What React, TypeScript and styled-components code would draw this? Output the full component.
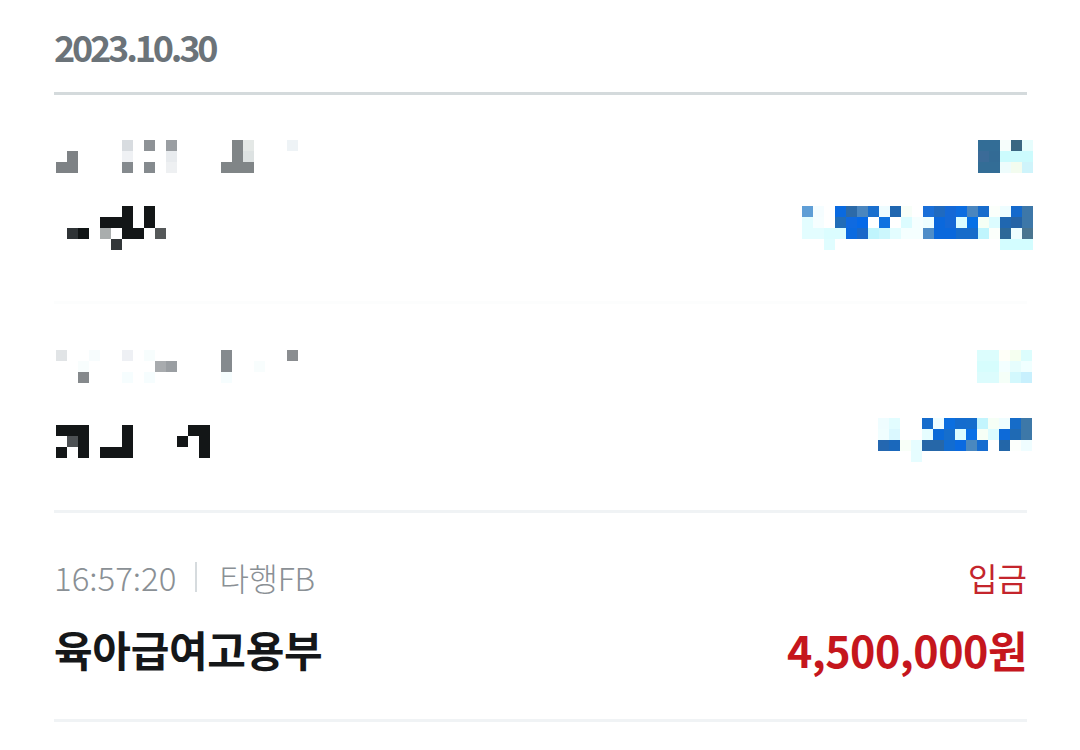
import React from "react";
import styled, { createGlobalStyle } from "styled-components";

const CELL = 11;
type MosaicRow = Array<[number, string]>;

const GlobalStyle = createGlobalStyle`
  html, body { margin: 0; padding: 0; background: #ffffff; }
  body { font-family: "Noto Sans CJK KR", "Noto Sans", sans-serif; }
`;

const Page = styled.div`
  width: 1080px;
  height: 750px;
  box-sizing: border-box;
  padding: 0 53px 0 54px;
  overflow: hidden;
  background: #ffffff;
`;

const DateHeader = styled.div`
  height: 95px;
  box-sizing: border-box;
  padding-top: 27px;
  border-bottom: 3px solid #d4dadc;
  font-size: 36px;
  line-height: 38px;
  font-weight: 700;
  color: #6b7379;
  letter-spacing: -3.2px;
`;

const Item = styled.div<{ $faint?: boolean }>`
  height: 209px;
  box-sizing: border-box;
  padding-top: 44px;
  display: flex;
  flex-direction: column;
  gap: 28px;
  border-bottom: 3px solid ${(p) => (p.$faint ? "#fcfdfd" : "#f0f3f5")};
`;

const TopLine = styled.div`
  height: 40px;
  display: flex;
  align-items: center;
  justify-content: space-between;
`;

const BottomLine = styled.div`
  height: 48px;
  display: flex;
  align-items: center;
  justify-content: space-between;
`;

const Meta = styled.div`
  display: flex;
  align-items: center;
  font-size: 32px;
  line-height: 40px;
  color: #8a9095;
  font-weight: 300;
  letter-spacing: -0.3px;
`;

const Time = styled.span`
  font-size: 33px;
  letter-spacing: 0px;
`;

const Divider = styled.span`
  width: 2px;
  height: 30px;
  background: #d6dbde;
  margin: 0 22px 0 19px;
`;

const Kind = styled.div`
  font-size: 32px;
  line-height: 40px;
  color: #c4252c;
  font-weight: 400;
`;

const Name = styled.div`
  font-size: 42px;
  line-height: 48px;
  font-weight: 700;
  color: #151719;
  letter-spacing: -0.3px;
`;

const Amount = styled.div`
  font-size: 43px;
  line-height: 48px;
  font-weight: 700;
  color: #c5161d;
  letter-spacing: -0.5px;
`;

const MosaicSvg = styled.svg<{ $dx: number; $dy: number }>`
  display: block;
  flex: none;
  shape-rendering: crispEdges;
  transform: translate(${(p) => p.$dx}px, ${(p) => p.$dy}px);
`;

function Mosaic({ rows, cols, dx = 0, dy = 0 }: { rows: MosaicRow[]; cols: number; dx?: number; dy?: number }) {
  const w = cols * CELL;
  const h = rows.length * CELL;
  return (
    <MosaicSvg $dx={dx} $dy={dy} width={w} height={h} viewBox={`0 0 ${w} ${h}`}>
      {rows.map((r, ri) =>
        r.map(([c, color]) => (
          <rect key={`${ri}-${c}`} x={c * CELL} y={ri * CELL} width={CELL} height={CELL} fill={color} />
        ))
      )}
    </MosaicSvg>
  );
}

const G = "#808587";
const K = "#131617";

const tx1Meta: MosaicRow[] = [
  [[6, "#d8dce0"], [8, "#8e9296"], [10, "#9a9ea2"], [16, G], [17, "#e4e8e6"], [21, "#eef3f6"]],
  [[1, "#7e8285"], [6, "#eff1f4"], [10, "#e8ebee"], [16, G], [17, "#dde2e2"]],
  [[0, "#7e8285"], [1, "#7e8285"], [6, "#858a8e"], [8, "#858a8e"], [10, "#eef0f2"], [15, G], [16, G], [17, G]],
];

const tx1Name: MosaicRow[] = [
  [[6, K], [8, K]],
  [[4, K], [5, K], [6, K], [8, K]],
  [[1, "#2f3336"], [2, "#101415"], [4, "#a9adad"], [6, K], [7, K], [9, "#555859"]],
  [[5, "#333739"]],
];

const tx1Kind: MosaicRow[] = [
  [[0, "#336d96"], [1, "#336d96"], [2, "#f6fdfb"], [3, "#3a6782"], [4, "#e6fdfd"]],
  [[0, "#3b6b98"], [1, "#336b95"], [2, "#ccfbfd"], [3, "#ccfbfd"], [4, "#ccfbfd"]],
  [[0, "#336d96"], [1, "#336d96"], [2, "#eefcfc"], [3, "#f3fcef"], [4, "#cff4fb"]],
];

const tx1Amount: MosaicRow[] = [
  [[0, "#5f9ed6"], [1, "#f5fdff"], [3, "#0a6ae0"], [4, "#2c6aa8"], [5, "#4a86bf"], [6, "#1a6fce"], [7, "#eefcff"], [8, "#2066b0"], [9, "#f8fef8"], [11, "#1a6fd8"], [12, "#1f6ac0"], [13, "#1468d6"], [14, "#0c6de0"], [15, "#4a86bf"], [16, "#186ccc"], [17, "#fbfffb"], [18, "#eefdff"], [19, "#1469cc"], [20, "#3d77a8"]],
  [[0, "#e3fdff"], [1, "#f6feff"], [3, "#216db8"], [4, "#0f6ae0"], [5, "#0569e8"], [7, "#0f72e0"], [9, "#dcfcff"], [10, "#f5ffff"], [11, "#eefeff"], [12, "#0a68dc"], [13, "#1468d6"], [14, "#dbfdff"], [15, "#0570e6"], [16, "#f5fff5"], [17, "#dcfcff"], [18, "#2067b0"], [19, "#2463a6"], [20, "#3d77a8"]],
  [[0, "#e3fdff"], [1, "#e3fdff"], [2, "#dbfdff"], [3, "#dbfdff"], [4, "#0a6ae0"], [5, "#1a68c8"], [6, "#c0f5fd"], [7, "#ccf7fd"], [8, "#e3fdff"], [9, "#f5ffff"], [10, "#f5ffff"], [11, "#4e8dc8"], [12, "#0a68dc"], [13, "#0a68dc"], [14, "#176cca"], [15, "#176cca"], [16, "#c0f5fd"], [17, "#fbfffb"], [18, "#2d6998"], [19, "#eefdff"], [20, "#4a7590"]],
  [[2, "#e0fdff"], [18, "#d3fdff"], [19, "#d3fdff"], [20, "#d3fdff"]],
];

const tx2Meta: MosaicRow[] = [
  [[0, "#e1e4e6"], [3, "#f7fcfd"], [6, "#eef0f4"], [8, "#f7fdfd"], [15, "#858a8e"], [21, "#8a8d90"]],
  [[2, "#f8fdfd"], [9, "#a8abae"], [10, "#9a9ea2"], [15, "#858a8e"], [18, "#f8fdfd"]],
  [[2, "#85898c"], [6, "#f6fdfe"], [8, "#f6fdfe"], [15, "#f6fdfe"]],
];

const tx2Name: MosaicRow[] = [
  [[0, K], [1, K], [2, K], [6, K], [12, K], [13, K]],
  [[1, "#4d5154"], [2, K], [6, K], [11, K], [13, K]],
  [[0, K], [2, K], [4, K], [5, K], [6, K], [13, K]],
];

const tx2Kind: MosaicRow[] = [
  [[0, "#dcfdfd"], [1, "#dcfdfd"], [2, "#fffff8"], [3, "#f5fff0"], [4, "#dcfdfd"]],
  [[0, "#d6fdfd"], [1, "#d6fdfd"], [2, "#f3ffff"], [3, "#e6fdfd"], [4, "#f0ffff"]],
  [[0, "#dcfcfd"], [1, "#dcfcfd"], [2, "#f5fff8"], [3, "#d3f8fd"], [4, "#c8f0fd"]],
];

const tx2Amount: MosaicRow[] = [
  [[0, "#effdff"], [1, "#e2fdff"], [4, "#166ccc"], [5, "#eefdff"], [6, "#0b6fe0"], [7, "#146cce"], [8, "#156dcc"], [9, "#c3f5fd"], [10, "#f6fff6"], [11, "#effdff"], [12, "#166cc8"], [13, "#3d78a8"]],
  [[0, "#f0feff"], [1, "#daf8ff"], [4, "#e6fdff"], [5, "#0b6ad8"], [6, "#166ecc"], [7, "#dcfdff"], [8, "#0870e6"], [9, "#f6fff6"], [10, "#dcfcff"], [11, "#0d6ad8"], [12, "#1f6ab4"], [13, "#3d78a8"]],
  [[0, "#2467b0"], [1, "#1a68bc"], [2, "#f8fff8"], [3, "#e6fdff"], [4, "#2667a8"], [5, "#2667a8"], [6, "#126cd0"], [7, "#0a6ae0"], [8, "#4a88bf"], [9, "#166cd0"], [11, "#2366a8"], [12, "#fcfffc"], [13, "#effdff"]],
  [[3, "#e6fdff"]],
];

export default function App() {
  return (
    <>
      <GlobalStyle />
      <Page>
        <DateHeader>2023.10.30</DateHeader>

        <Item $faint>
          <TopLine>
            <Mosaic rows={tx1Meta} cols={22} dx={2} dy={-3} />
            <Mosaic rows={tx1Kind} cols={5} dx={6} dy={-3} />
          </TopLine>
          <BottomLine>
            <Mosaic rows={tx1Name} cols={10} dx={2} dy={-3} />
            <Mosaic rows={tx1Amount} cols={21} dx={6} dy={-3} />
          </BottomLine>
        </Item>

        <Item>
          <TopLine>
            <Mosaic rows={tx2Meta} cols={22} dx={2} dy={-2} />
            <Mosaic rows={tx2Kind} cols={5} dx={5} dy={-2} />
          </TopLine>
          <BottomLine>
            <Mosaic rows={tx2Name} cols={14} dx={2} dy={1} />
            <Mosaic rows={tx2Amount} cols={14} dx={5} dy={0} />
          </BottomLine>
        </Item>

        <Item>
          <TopLine>
            <Meta>
              <Time>16:57:20</Time>
              <Divider />
              타행FB
            </Meta>
            <Kind>입금</Kind>
          </TopLine>
          <BottomLine>
            <Name>육아급여고용부</Name>
            <Amount>4,500,000원</Amount>
          </BottomLine>
        </Item>
      </Page>
    </>
  );
}
